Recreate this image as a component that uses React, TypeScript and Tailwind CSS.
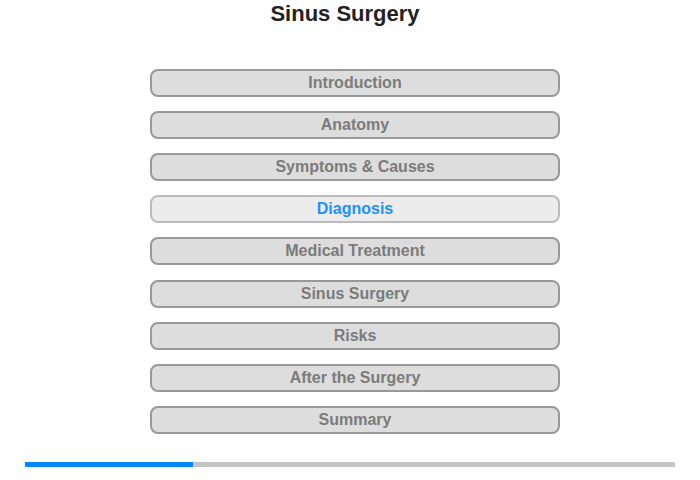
const items = [
  "Introduction",
  "Anatomy",
  "Symptoms & Causes",
  "Diagnosis",
  "Medical Treatment",
  "Sinus Surgery",
  "Risks",
  "After the Surgery",
  "Summary",
];

export default function App() {
  const active = 3;
  return (
    <div className="w-[700px] h-[480px] bg-white font-['Liberation_Sans',Arial,sans-serif]">
      <h1 className="h-[28px] leading-[28px] text-center text-[22px] font-bold text-[#222] mr-[10px]">
        Sinus Surgery
      </h1>
      <div className="mt-[41px] flex flex-col items-center gap-[14.12px] ml-[10px]">
        {items.map((t, i) => (
          <button
            key={t}
            className={
              i === active
                ? "w-[410px] h-[28px] shrink-0 rounded-[8px] border-2 border-[#bbbbbb] bg-[#ececec] text-[16px] font-bold text-[#1e90ff] leading-none"
                : "w-[410px] h-[28px] shrink-0 rounded-[8px] border-2 border-[#999999] bg-[#dddddd] text-[16px] font-bold text-[#7b7b7b] leading-none"
            }
          >
            {t}
          </button>
        ))}
      </div>
      <div className="mt-[28.5px] mx-[25px] h-[5px] flex bg-[#c4c4c4]">
        <div className="w-[168px] h-full bg-[#0088ff]" />
      </div>
    </div>
  );
}
